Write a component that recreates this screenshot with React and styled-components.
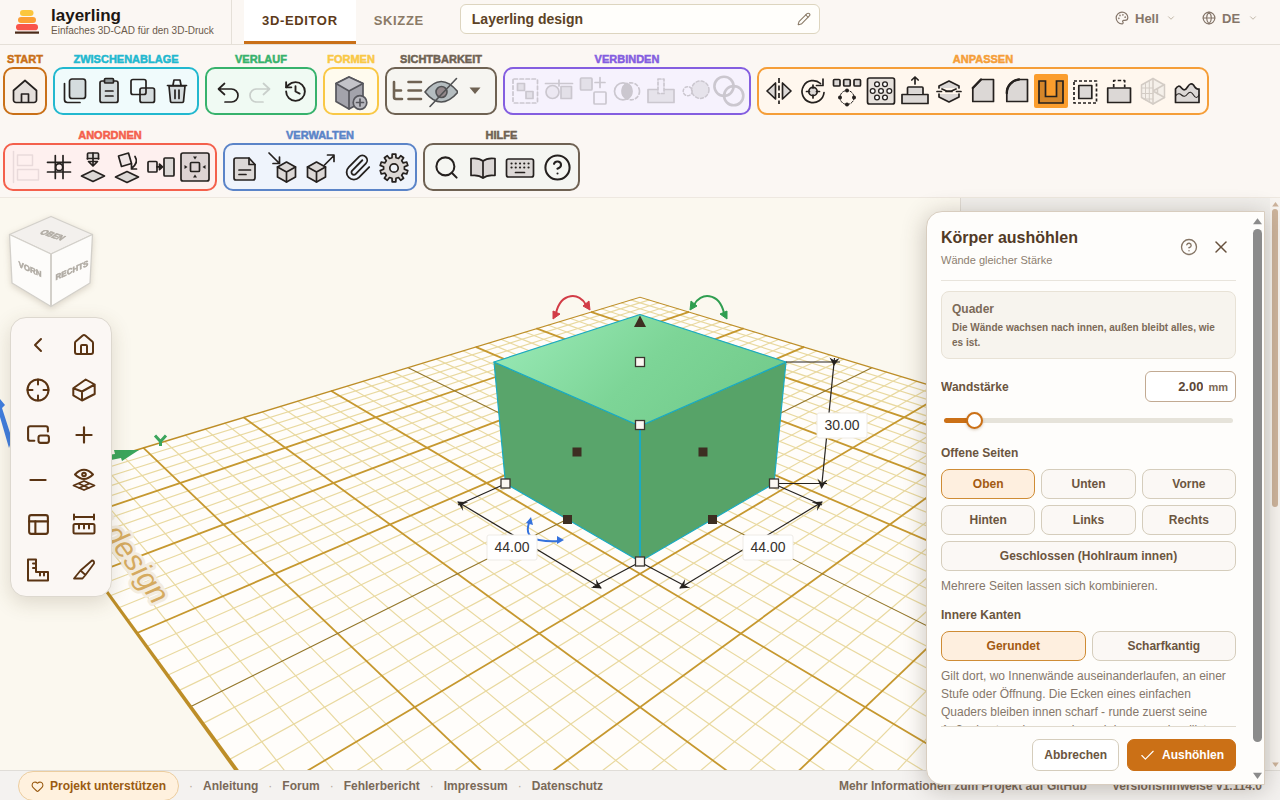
import React, { useState } from 'react'
import styled, { createGlobalStyle } from 'styled-components'
import {
  Check,
  ChevronDown,
  ChevronLeft,
  CircleHelp,
  Globe,
  Heart,
  History,
  House,
  Palette,
  PanelsTopLeft,
  Paperclip,
  Pencil,
  PictureInPicture2,
  Plus,
  Minus,
  Search,
  X,
} from 'lucide-react'

const GlobalStyle = createGlobalStyle`
  * {
    box-sizing: border-box;
  }
  body {
    margin: 0;
    overflow: hidden;
    background: #fbf8ef;
    color: #5b4636;
    font-family: 'Liberation Sans', Arial, sans-serif;
    font-size: 12px;
  }
  button, input, select {
    font: inherit;
    color: inherit;
  }
  button {
    cursor: pointer;
  }
`

const Page = styled.div`
  display: grid;
  grid-template-rows: auto auto 1fr 30px;
  height: 100vh;
`

/* ---------- header ---------- */

const Header = styled.header`
  display: flex;
  align-items: stretch;
  height: 45px;
  background: #fbf7f3;
  border-bottom: 1px solid #e5e0d8;
`

const Brand = styled.div`
  display: flex;
  align-items: center;
  gap: 12px;
  width: 232px;
  padding-left: 15px;
  border-right: 1px solid #e5e0d8;
`

const BrandName = styled.h1`
  margin: 0;
  font-size: 17px;
  line-height: 18px;
  color: #1d1712;
`

const BrandClaim = styled.p`
  margin: 0;
  font-size: 10px;
  line-height: 12px;
  white-space: nowrap;
  color: #6b5a4b;
`

const Tabs = styled.nav`
  display: flex;
  margin-left: 12px;
`

const Tab = styled.button`
  padding: 0 18px;
  border: 0;
  border-bottom: 3px solid ${(props) => (props.$active ? '#c97018' : 'transparent')};
  background: ${(props) => (props.$active ? '#fff' : 'none')};
  color: ${(props) => (props.$active ? '#5c3a1a' : '#8a7a66')};
  font-size: 13px;
  font-weight: 700;
  letter-spacing: 0.05em;
`

const NameField = styled.label`
  display: flex;
  align-items: center;
  width: 360px;
  height: 30px;
  margin: 4px 0 0 18px;
  padding: 0 8px 0 11px;
  border: 1px solid #ddd5bf;
  border-radius: 6px;
  background: #fffefb;
  color: #8a7a66;

  input {
    flex: 1;
    min-width: 0;
    padding: 0;
    border: 0;
    outline: 0;
    background: none;
    color: #5c4326;
    font-size: 14px;
    font-weight: 700;
  }
`

const HeaderTools = styled.div`
  display: flex;
  gap: 26px;
  margin: 0 22px 8px auto;
  align-items: center;
`

const Picker = styled.label`
  display: flex;
  align-items: center;
  gap: 6px;
  color: #85766a;

  select {
    padding: 0;
    border: 0;
    appearance: none;
    background: none;
    font-size: 13px;
    font-weight: 700;
  }
  svg:last-child {
    margin-left: 1px;
    color: #b5a998;
  }
`

/* ---------- tool ribbon ---------- */

const Ribbon = styled.div`
  display: flex;
  flex-wrap: wrap;
  gap: 14px 6px;
  padding: 8px 3px 6px;
  background: #fbf7f3;
  border-bottom: 1px solid #eee8e0;
`

const Group = styled.section`
  color: ${(props) => props.$tone};
`

const GroupTitle = styled.h2`
  margin: 0 0 2px;
  font-size: 11px;
  font-weight: 900;
  line-height: 12px;
  text-align: center;
  text-transform: uppercase;
  -webkit-text-stroke: 0.5px currentColor;
`

const GroupBody = styled.div`
  display: flex;
  align-items: center;
  gap: ${(props) => props.$gap || 0}px;
  height: 48px;
  padding: 0 3px;
  border: 2px solid currentColor;
  border-radius: 10px;
  background: ${(props) => props.$tint};
`

const Tool = styled.button`
  display: flex;
  align-items: center;
  justify-content: center;
  width: ${(props) => props.$w || 34}px;
  height: 34px;
  padding: 0;
  border: 0;
  border-radius: 2px;
  background: ${(props) => (props.$active ? '#fb9d2d' : 'none')};
  color: ${(props) => (props.$faint ? '#cbc7cf' : '#25211f')};
`

/* ---------- workspace ---------- */

const Workspace = styled.main`
  position: relative;
  display: flex;
  min-height: 0;
  background: #fbf8ef;
`

const Canvas = styled.svg`
  flex: 1;
  min-width: 0;
  width: 100%;
  height: 100%;
`

const SideDock = styled.aside`
  position: absolute;
  inset: 0 0 0 auto;
  display: flex;
  justify-content: flex-end;
  width: 320px;
  border-left: 1px solid #dfdad3;
  background: #f1efec;
`

const DockScroll = styled.div`
  display: flex;
  flex-direction: column;
  align-items: center;
  gap: 2px;
  width: 10px;
  padding: 4px 0 3px;
  background: #f8f5f1;
  color: #cdb49c;
`

const DockThumb = styled.div`
  width: 6px;
  height: 298px;
  margin-bottom: auto;
  border-radius: 3px;
  background: #cdb49c;
`

const ViewTools = styled.div`
  position: absolute;
  top: 16px;
  left: 8px;
`

const CubeButton = styled.button`
  display: block;
  padding: 0;
  border: 0;
  background: none;
  filter: drop-shadow(0 2px 3px rgba(90, 70, 40, 0.2));
`

const ViewPalette = styled.div`
  display: grid;
  grid-template-columns: 46px 46px;
  grid-auto-rows: 45px;
  width: 102px;
  margin: 5px 0 0 2px;
  padding: 4px;
  border: 1px solid #ddd8cf;
  border-radius: 16px;
  background: #fbf7f4;
  box-shadow: 0 6px 20px rgba(90, 70, 40, 0.18);
`

const PaletteButton = styled.button`
  display: grid;
  place-items: center;
  padding: 0;
  border: 0;
  background: none;
  color: #5a3413;
`

/* ---------- dialog ---------- */

const Dialog = styled.section`
  position: absolute;
  top: 13px;
  right: 15px;
  bottom: -15px;
  z-index: 2;
  display: flex;
  width: 339px;
  border: 1px solid #d8cdbf;
  border-radius: 16px 0 0 16px;
  background: #fefdfb;
  box-shadow: 0 4px 24px rgba(70, 55, 40, 0.3);
`

const DialogMain = styled.form`
  display: flex;
  flex: 1;
  flex-direction: column;
  min-width: 0;
  padding: 13px 14px 13px;
`

const DialogScroll = styled.div`
  display: flex;
  flex-direction: column;
  align-items: center;
  gap: 4px;
  width: 14px;
  padding: 6px 0 5px;
  color: #8b8b8b;
`

const DialogThumb = styled.div`
  flex: 1;
  width: 9px;
  margin-bottom: 26px;
  border-radius: 5px;
  background: #8b8b8b;
`

const DialogHead = styled.header`
  display: flex;
  align-items: center;
  gap: 10px;
  height: 56px;
  padding-bottom: 2px;
  border-bottom: 1px solid #e8e4dc;

  h2 {
    margin: 0 0 5px;
    color: #523a26;
    font-size: 16px;
    line-height: 20px;
  }
  p {
    margin: 0 0 9px;
    color: #8d7f70;
    font-size: 11px;
    line-height: 14px;
  }
  div {
    margin-right: auto;
  }
`

const HeadButton = styled.button`
  display: grid;
  place-items: center;
  width: 22px;
  height: 22px;
  margin-bottom: 10px;
  padding: 0;
  border: 0;
  background: none;
  color: #857565;

  &:last-child {
    margin-right: 4px;
    color: #66503c;
  }
`

const DialogBody = styled.div`
  display: flex;
  flex: 1;
  flex-direction: column;
  min-height: 0;
  padding-top: 10px;
  overflow: hidden;
`

const Info = styled.div`
  flex: none;
  padding: 9px 10px 8px;
  border: 1px solid #e8e2d6;
  border-radius: 8px;
  background: #f7f4ee;
  color: #7c6a58;
  font-size: 10px;
  font-weight: 700;
  line-height: 15px;

  strong {
    display: block;
    margin-bottom: 3px;
    font-size: 12px;
    line-height: 16px;
  }
`

const FieldRow = styled.div`
  display: flex;
  flex: none;
  align-items: center;
  justify-content: space-between;
  margin-top: 12px;
  color: #6b553f;
  font-weight: 700;
`

const Amount = styled.span`
  display: flex;
  align-items: center;
  gap: 5px;
  width: 91px;
  height: 31px;
  padding: 0 7px;
  border: 1px solid #c2aa92;
  border-radius: 6px;
  background: #fff;
  color: #7c6a58;
  font-size: 11px;

  input {
    flex: 1;
    min-width: 0;
    padding: 0;
    border: 0;
    outline: 0;
    background: none;
    color: #5b4636;
    font-size: 13px;
    font-weight: 700;
    text-align: right;
  }
`

const Slider = styled.input`
  flex: none;
  width: calc(100% - 6px);
  height: 18px;
  margin: 9px 3px 0;
  appearance: none;
  background: none;

  &::-webkit-slider-runnable-track {
    height: 5px;
    border-radius: 3px;
    background: linear-gradient(90deg, #cb7016 10%, #e6e3da 10%);
  }
  &::-webkit-slider-thumb {
    width: 17px;
    height: 17px;
    margin-top: -6px;
    appearance: none;
    border: 2px solid #cb7016;
    border-radius: 50%;
    background: #fff;
    box-shadow: 0 1px 3px rgba(120, 70, 20, 0.3);
  }
`

const FieldTitle = styled.h3`
  flex: none;
  margin: ${(props) => props.$top}px 0 8px;
  color: #6b553f;
  font-size: 12px;
  line-height: 16px;
`

const Choices = styled.div`
  display: grid;
  flex: none;
  grid-template-columns: repeat(${(props) => props.$cols}, 1fr);
  gap: 6px;
`

const Choice = styled.button`
  grid-column: ${(props) => (props.$wide ? '1 / -1' : 'auto')};
  height: 30px;
  padding: 0;
  border: 1px solid ${(props) => (props.$on ? '#cf8c35' : '#d5cdbc')};
  border-radius: 8px;
  background: ${(props) => (props.$on ? '#feefdf' : '#fbf8f5')};
  color: ${(props) => (props.$on ? '#a35a12' : '#6b553f')};
  font-weight: 700;
`

const Hint = styled.p`
  flex: none;
  margin: 6px 0 0;
  color: #85776a;
  line-height: 18px;
`

const Actions = styled.footer`
  display: flex;
  justify-content: flex-end;
  gap: 8px;
  padding-top: 12px;
  border-top: 1px solid #e0dace;
`

const Action = styled.button`
  display: flex;
  align-items: center;
  gap: 6px;
  height: 32px;
  padding: 0 11px;
  border: 1px solid ${(props) => (props.$primary ? '#cb7016' : '#d5cdbc')};
  border-radius: 7px;
  background: ${(props) => (props.$primary ? '#cb7016' : '#fff')};
  color: ${(props) => (props.$primary ? '#fff' : '#6b553f')};
  font-weight: 700;
`

/* ---------- footer ---------- */

const Footer = styled.footer`
  display: flex;
  align-items: flex-start;
  justify-content: space-between;
  padding: 0 18px;
  border-top: 1px solid #e0ddd8;
  background: #f4f2f0;
  font-weight: 700;
  line-height: 30px;
  white-space: nowrap;

  a {
    color: #7a6958;
    text-decoration: none;
  }
`

const FooterLinks = styled.nav`
  display: flex;

  span {
    width: 24px;
    color: #b5a998;
    font-weight: 400;
    text-align: center;
  }
`

const VersionLinks = styled.nav`
  display: flex;
  gap: 25px;
`

const Support = styled.a`
  display: flex;
  align-items: center;
  gap: 6px;
  height: 30px;
  padding: 0 12px;
  border: 1px solid #eccd9f;
  border-radius: 15px;
  background: #fff1de;

  && {
    color: #9a5b12;
  }
`

/* ---------- ribbon icons, all on a 34px board ---------- */

const FILL = '#dcd8d6'

const Board = ({ children, w = 34, h = 34, sw = 1.7, color = 'currentColor' }) => (
  <svg
    width={w}
    height={h}
    viewBox={`0 0 ${w} ${h}`}
    fill="none"
    stroke={color}
    strokeWidth={sw}
    strokeLinecap="round"
    strokeLinejoin="round"
    aria-hidden="true"
  >
    {children}
  </svg>
)

const gearPath = (cx, cy, rOut, rIn, teeth) => {
  const pts = []
  const step = (Math.PI * 2) / teeth
  for (let i = 0; i < teeth; i++) {
    const mid = i * step
    ;[
      [-0.3, rIn],
      [-0.2, rOut],
      [0.2, rOut],
      [0.3, rIn],
    ].forEach(([t, r]) => {
      const x = cx + r * Math.sin(mid + t * step)
      const y = cy - r * Math.cos(mid + t * step)
      pts.push(`${x.toFixed(1)} ${y.toFixed(1)}`)
    })
  }
  return `M${pts.join('L')}Z`
}

const SmallCube = ({ x }) => (
  <g transform={`translate(${x} 22)`} fill={FILL}>
    <path d="M0-10L9-5V5L0 10-9 5V-5Z" />
    <path d="M-9-5L0 0 9-5M0 0V10" />
  </g>
)

const icons = {
  home: (
    <Board>
      <path d="M5.5 16.5L17 6.5l11.5 10V26a2.5 2.5 0 0 1-2.5 2.5H8A2.5 2.5 0 0 1 5.5 26Z" fill="#e4dfdb" />
      <path d="M13.5 28v-8h7v8" />
    </Board>
  ),
  copy: (
    <Board>
      <rect x="11.5" y="5" width="16" height="19.5" rx="2.5" fill="#d5dcde" />
      <path d="M6.5 9.5v16a3 3 0 0 0 3 3H22" />
    </Board>
  ),
  paste: (
    <Board>
      <rect x="8" y="7" width="18" height="21.5" rx="2" fill="#d5dcde" />
      <rect x="12.5" y="4.5" width="9" height="4.5" rx="1" fill="#8f9698" />
      <path d="M13.5 17h7.5M13.5 22h7.5" />
    </Board>
  ),
  duplicate: (
    <Board>
      <rect x="14" y="14" width="14.5" height="14.5" rx="2" fill="#d5dcde" />
      <rect x="5" y="5.5" width="15" height="15" rx="2" />
    </Board>
  ),
  trash: (
    <Board>
      <path d="M9 12l1.5 15.5a1.5 1.5 0 0 0 1.5 1h10a1.5 1.5 0 0 0 1.5-1L25 12Z" fill="#d5dcde" />
      <path d="M7.5 11.5h19M13 11l1-5h6l1 5M15 16v8.5M19 16v8.5" />
    </Board>
  ),
  undo: (
    <Board>
      <path d="M14.5 9.5L8.5 15l6 5.5M9 15h12.5a6.5 6.5 0 0 1 0 13H15" />
    </Board>
  ),
  redo: (
    <Board color="#c9cfcb">
      <path d="M19.5 9.5l6 5.5-6 5.5M25 15H12.5a6.500 6.500 0 0 0 0 13H19" />
    </Board>
  ),
  history: <History size={25} strokeWidth={1.8} />,
  addShape: (
    <Board w={46} h={40} color="#56565c">
      <path d="M21 6l14 6.5v18L21 38 8 30.5v-18Z" fill="#a3a3ab" />
      <path d="M21 6l14 6.5L21 20 8 12.5Z" fill="#c3c3c9" />
      <path d="M21 20v18" />
      <circle cx="32" cy="31.5" r="6.8" fill="#b9b9bf" />
      <path d="M28.5 31.5h7M32 28v7" />
    </Board>
  ),
  tree: (
    <Board sw={2.6} color="#6f6253">
      <path d="M4 8v15a2 2 0 0 0 2 2h6M4 16.5h7M18.5 8H31M18.5 16.5H31M18.5 25H31" />
    </Board>
  ),
  hide: (
    <Board color="#515254" sw={1.6}>
      <path d="M1 18q16-21 33 0-17 20-33 0Z" fill="#b5bdc0" />
      <circle cx="17.5" cy="18" r="5.5" fill="#94898c" />
      <path d="M6 32.5L32.5 4.5" />
    </Board>
  ),
  caret: (
    <Board>
      <path d="M11.5 13.5h11l-5.500 6.500Z" fill="#6f6253" stroke="none" />
    </Board>
  ),
  group: (
    <Board>
      <rect x="5" y="5" width="24.5" height="24" rx="1" strokeDasharray="3.5 2.5" />
      <rect x="9.5" y="9.5" width="7" height="7" fill="#e3e0e8" />
      <rect x="18" y="17.5" width="7" height="7" fill="#e3e0e8" />
    </Board>
  ),
  alignTop: (
    <Board>
      <path d="M3.5 9.5h27M17 6v6" />
      <circle cx="10.5" cy="18" r="6.5" fill="#ece8f2" />
      <rect x="19" y="12.5" width="10.5" height="12" fill="#e3e0e8" />
    </Board>
  ),
  addPart: (
    <Board>
      <rect x="4.5" y="4" width="11.5" height="12" rx="1" fill="#e3e0e8" />
      <rect x="18" y="18" width="12" height="12" rx="1" />
      <path d="M24 3.5v10M19 8.5h10" />
    </Board>
  ),
  intersect: (
    <Board>
      <path d="M17 9.5a8.500 8.500 0 0 1 0 15.500 8.500 8.500 0 0 1 0-15.500Z" fill="#cbc7cf" />
      <circle cx="13" cy="17.3" r="8.5" />
      <circle cx="21" cy="17.3" r="8.5" strokeDasharray="3 2.5" />
    </Board>
  ),
  cutOut: (
    <Board>
      <rect x="4" y="15.5" width="26" height="13" fill="#e6e3eb" />
      <rect x="14" y="5" width="6" height="14.5" fill="#f3effa" strokeDasharray="3 2" />
    </Board>
  ),
  subtract: (
    <Board sw={1.5}>
      <circle cx="22.3" cy="15.7" r="8.7" fill="#e6e3eb" strokeDasharray="3 2.2" />
      <circle cx="9.7" cy="17.2" r="4.5" strokeDasharray="2.5 2" />
    </Board>
  ),
  link: (
    <Board sw={2.6}>
      <circle cx="12" cy="12.3" r="9.6" />
      <circle cx="21.7" cy="21.7" r="9.6" />
    </Board>
  ),
  mirror: (
    <Board>
      <path d="M5 17l8.5-8v16Z" fill={FILL} />
      <path d="M29 17l-8.5-8v16Z" fill={FILL} />
      <path d="M17 4v26" strokeDasharray="5 2.5" strokeLinecap="butt" />
    </Board>
  ),
  rotate: (
    <Board>
      <path d="M28 18.5A11 11 0 1 1 24.5 9.5M27 5v6.5h-6.5" />
      <circle cx="17" cy="17.5" r="4.2" fill={FILL} />
      <path d="M17 11v3M17 21v3M10.5 17.5h3M20.5 17.5h3" />
    </Board>
  ),
  array: (
    <Board>
      <rect x="3.5" y="5.5" width="6.5" height="6.5" rx="1" fill={FILL} />
      <rect x="13.7" y="5.5" width="6.5" height="6.5" rx="1" fill={FILL} />
      <rect x="24" y="5.5" width="6.5" height="6.5" rx="1" fill={FILL} />
      <circle cx="17" cy="23.5" r="7" strokeWidth="1" strokeDasharray="2.5 1.5" />
      <g fill="currentColor" stroke="none">
        <circle cx="17" cy="16.5" r="2" />
        <circle cx="17" cy="30.5" r="2" />
        <circle cx="10" cy="23.5" r="2" />
        <circle cx="24" cy="23.5" r="2" />
      </g>
    </Board>
  ),
  perforate: (
    <Board>
      <rect x="3.5" y="4" width="27" height="26" rx="2" fill="#e6e1dc" />
      <g strokeWidth="1.3" fill="#fff">
        {[[13, 10.3], [21, 10.3], [8.7, 17], [17, 17], [25.3, 17], [13, 23.5], [21, 23.5]].map(([x, y]) => (
          <circle key={`${x}-${y}`} cx={x} cy={y} r="2.4" />
        ))}
      </g>
    </Board>
  ),
  extrude: (
    <Board>
      <rect x="4" y="20.5" width="26" height="9" fill={FILL} />
      <path d="M9.5 20v-6a1 1 0 0 1 1-1H24a1 1 0 0 1 1 1v6" fill={FILL} />
      <path d="M17 10V3M13.8 6L17 3l3.200 3" />
    </Board>
  ),
  cut: (
    <Board>
      <path d="M7 14v-2l10-5 10 5v2" fill={FILL} />
      <path d="M7 20v3l10 5 10-5v-3" fill={FILL} />
      <path d="M10 15l4.5 2h5L24 15M5 17.5h4.5M14 17.500h6M24.500 17.500h4.500" />
    </Board>
  ),
  chamfer: (
    <Board>
      <path d="M6.8 27.5V14L15 5.5h12.5v22Z" fill={FILL} />
      <path d="M6.8 14L15 5.5" strokeWidth="2.4" />
    </Board>
  ),
  fillet: (
    <Board>
      <path d="M6.8 27.5V19A13.5 13.5 0 0 1 19 5.5h8.5v22Z" fill={FILL} />
      <path d="M6.8 19A13.5 13.5 0 0 1 19 5.5" strokeWidth="2.4" />
    </Board>
  ),
  hollow: (
    <Board>
      <path d="M5 7h6.5v15.5h11V7H29v22H5Z" fill="#d5862a" strokeLinejoin="miter" />
    </Board>
  ),
  shell: (
    <Board>
      <rect x="6" y="7" width="22.5" height="22" strokeDasharray="3 2" strokeLinecap="butt" />
      <rect x="10.8" y="11.5" width="13" height="13" fill={FILL} />
    </Board>
  ),
  boss: (
    <Board>
      <rect x="5.7" y="14" width="22.8" height="14.5" fill={FILL} />
      <path d="M11.7 13.5V6.5h11v7" strokeDasharray="3.5 2" strokeLinecap="butt" />
    </Board>
  ),
  mesh: (
    <Board color="#d3ccc5" sw={1.5}>
      <path d="M17 4.5l11.5 6.5v12.5L17 30 5.500 23.500V11Z" fill="#f5f0ea" />
      <path d="M17 4.5V30M17 17l11.500-6.500M17 17l11.500 6.500M21.500 14.500v5.500" />
      <path d="M9.500 9v17M13.300 7v21M5.500 14H17M5.500 19.500H17M8 25h9" strokeWidth="1" />
    </Board>
  ),
  waves: (
    <Board>
      <path d="M5.5 28.5V15q3-5 6-1t6-1 6-2q3 5 5.500 4v13.500Z" fill={FILL} />
      <path d="M5.5 22q3-4 6-1t6-1 6 1 5.500 0" strokeWidth="1.1" />
    </Board>
  ),
  alignLeft: (
    <Board color="#e9dadb" sw={1.5}>
      <path d="M5.5 1.5v31" />
      <rect x="9.5" y="5" width="15" height="10.5" />
      <rect x="9.5" y="19.5" width="21" height="10.5" />
    </Board>
  ),
  snapGrid: (
    <Board>
      <path d="M13.3 5.5v23M21 5.5v23M5.5 12.3h23M5.5 22h23" />
      <circle cx="17.2" cy="17.2" r="3.5" />
    </Board>
  ),
  drop: (
    <Board>
      <path d="M11.5 9V4a1 1 0 0 1 1-1h9a1 1 0 0 1 1 1v5" fill={FILL} />
      <path d="M11.5 8.5h11M17 3v12.500M12.500 11.500l4.500 4.500 4.500-4.500Z" />
      <path d="M5.5 26L17 20.5 28.5 26 17 31.500Z" fill={FILL} />
    </Board>
  ),
  layFlat: (
    <Board>
      <path d="M8.5 6l10-3 3 10.5-10 3Z" fill="#f0e6e6" />
      <path d="M25 6.5q4 6-3.500 12M21.500 14v5h5" />
      <path d="M5.5 27L17 21.5 28.5 27 17 32.500Z" fill={FILL} />
    </Board>
  ),
  attach: (
    <Board>
      <rect x="4" y="11.5" width="9" height="10.5" rx="1" fill="#f0e6e6" />
      <rect x="20" y="8" width="10" height="18" rx="1" fill={FILL} />
      <path d="M13 16.8h4M15.5 14l3 2.800-3 2.800Z" fill="currentColor" />
    </Board>
  ),
  center: (
    <Board>
      <rect x="3" y="3" width="28" height="28" rx="2" fill="#ddd3d3" />
      <rect x="12.5" y="12.5" width="9" height="9" rx="1" />
      <path
        d="M15 6.5h4l-2 3ZM15 27.5h4l-2-3ZM6.5 15v4l3-2ZM27.5 15v4l-3-2Z"
        fill="currentColor"
        stroke="none"
      />
    </Board>
  ),
  notes: (
    <Board>
      <path d="M5 10a2 2 0 0 1 2-2h13l6 6.500V28a2 2 0 0 1-2 2H7a2 2 0 0 1-2-2Z" fill={FILL} />
      <path d="M20 8v6.5h6M10 20h11.500M10 24.500h7" />
    </Board>
  ),
  importModel: (
    <Board>
      <path d="M3 3l10.5 10.5M13.5 7v6.5H7" />
      <SmallCube x={20.5} />
    </Board>
  ),
  exportModel: (
    <Board>
      <path d="M21.5 15L31 5.5M24.5 5H31v6.5" />
      <SmallCube x={13.5} />
    </Board>
  ),
  clip: <Paperclip size={29} strokeWidth={1.5} />,
  gear: (
    <Board>
      <path d={gearPath(17, 18, 14, 10.5, 10)} fill={FILL} />
      <circle cx="17" cy="18" r="4.2" fill="#eef2f9" />
    </Board>
  ),
  search: <Search size={27} strokeWidth={1.8} />,
  manual: (
    <Board>
      <path d="M17 11q-4-3.500-12-2.500v17q8-1 12 2.500 4-3.500 12-2.500v-17q-8-1-12 2.500ZM17 11v17" fill={FILL} />
    </Board>
  ),
  keys: (
    <Board>
      <rect x="3.5" y="9" width="27" height="18" rx="2" fill={FILL} />
      <path
        d="M8.500 13.500h.1M12.700 13.500h.1M17 13.500h.1M21.200 13.500h.1M25.500 13.500h.1M8.500 17.500h.1M12.700 17.500h.1M17 17.500h.1M21.200 17.500h.1M25.500 17.500h.1"
        strokeWidth="2.1"
      />
      <path d="M12.500 22.500h9" />
    </Board>
  ),
  help: <CircleHelp size={29} strokeWidth={1.7} />,
}

const groups = [
  { title: 'Start', tone: '#c97018', tint: '#fcf4ec', tools: [['home', 'Startseite']] },
  {
    title: 'Zwischenablage',
    tone: '#22b8cf',
    tint: '#f0fbfc',
    tools: [['copy', 'Kopieren'], ['paste', 'Einfügen'], ['duplicate', 'Duplizieren'], ['trash', 'Löschen']],
  },
  {
    title: 'Verlauf',
    tone: '#37b26c',
    tint: '#f0faf3',
    tools: [['undo', 'Rückgängig'], ['redo', 'Wiederholen'], ['history', 'Verlauf']],
  },
  { title: 'Formen', tone: '#f9c846', tint: '#fffbee', width: 46, tools: [['addShape', 'Form hinzufügen']] },
  {
    title: 'Sichtbarkeit',
    tone: '#6f6253',
    tint: '#f6f5f1',
    tools: [['tree', 'Objektbaum'], ['hide', 'Ausblenden'], ['caret', 'Weitere']],
  },
  {
    title: 'Verbinden',
    tone: '#845ee0',
    tint: '#f6f2fd',
    faint: true,
    tools: [
      ['group', 'Gruppieren'],
      ['alignTop', 'Bündig'],
      ['addPart', 'Vereinen'],
      ['intersect', 'Schnittmenge'],
      ['cutOut', 'Ausschneiden'],
      ['subtract', 'Abziehen'],
      ['link', 'Verketten'],
    ],
  },
  {
    title: 'Anpassen',
    tone: '#f59e38',
    tint: '#fff7ee',
    tools: [
      ['mirror', 'Spiegeln'],
      ['rotate', 'Drehen'],
      ['array', 'Muster'],
      ['perforate', 'Lochmuster'],
      ['extrude', 'Extrudieren'],
      ['cut', 'Schneiden'],
      ['chamfer', 'Fase'],
      ['fillet', 'Rundung'],
      ['hollow', 'Aushöhlen'],
      ['shell', 'Versatz'],
      ['boss', 'Aufsatz'],
      ['mesh', 'Netz'],
      ['waves', 'Textur'],
    ],
  },
  {
    title: 'Anordnen',
    tone: '#f4604c',
    tint: '#fef0ef',
    tools: [
      ['alignLeft', 'Ausrichten'],
      ['snapGrid', 'Am Raster'],
      ['drop', 'Auf Boden'],
      ['layFlat', 'Flach legen'],
      ['attach', 'Anlegen'],
      ['center', 'Zentrieren'],
    ],
  },
  {
    title: 'Verwalten',
    tone: '#5b84c8',
    tint: '#eff4fc',
    width: 36,
    gap: 1,
    tools: [
      ['notes', 'Notizen'],
      ['importModel', 'Importieren'],
      ['exportModel', 'Exportieren'],
      ['clip', 'Anhänge'],
      ['gear', 'Einstellungen'],
    ],
  },
  {
    title: 'Hilfe',
    tone: '#6f6253',
    tint: '#f5f6f2',
    width: 36,
    gap: 1,
    tools: [['search', 'Suche'], ['manual', 'Anleitung'], ['keys', 'Tastenkürzel'], ['help', 'Hilfe']],
  },
]

/* ---------- 3D view ---------- */

// Ground plane: u runs down-left, v runs down-right from the rear corner, in mm.
const HORIZON = 6
const DEPTH = 0.00195
const BED = 200

const project = (u, v) => {
  const d = 1 - DEPTH * (u + v)
  return [640 + (959 * DEPTH * (v - u)) / d, HORIZON + 291 / d]
}

const points = (list) => list.map(([u, v]) => project(u, v).map((n) => n.toFixed(1)).join(',')).join(' ')

const gridLines = (step, skip) => {
  const lines = []
  for (let n = step; n < BED; n += step) {
    if (n % skip === 0) continue
    const end = Math.min(BED, 335 - n)
    lines.push(points([[n, 0], [n, end]]), points([[0, n], [end, n]]))
  }
  return lines
}

const minorLines = gridLines(5, 25)
const majorLines = gridLines(25, 100)

const solidHandles = [[577, 452], [703, 452], [567.5, 519.5], [712.5, 519.5]]
const openHandles = [[640, 362], [640, 425], [505.5, 483.5], [774, 483.5], [640, 561.5]]

const Measure = ({ x, y, children }) => (
  <g>
    <rect x={x - 25} y={y - 13} width="50" height="25" rx="2" fill="#fff" stroke="#eeebe6" />
    <text x={x} y={y + 4} textAnchor="middle" fontSize="14" fill="#37322e">
      {children}
    </text>
  </g>
)

const RotateArrow = () => (
  <g>
    <path d="M556 313C561 292 580 292 586 305" fill="none" stroke="currentColor" strokeWidth="2" />
    <path d="M553 319l0-8 7 3ZM590 310l-7-4 6-5Z" fill="currentColor" stroke="currentColor" />
  </g>
)

const Scene = () => (
  <Canvas viewBox="0 198 1280 572" preserveAspectRatio="xMidYMid slice" role="img" aria-label="3D-Ansicht">
    <defs>
      <linearGradient id="lid" x1="0" y1="0.3" x2="1" y2="0.7">
        <stop offset="0" stopColor="#97e8b4" />
        <stop offset="0.5" stopColor="#7dd597" />
        <stop offset="1" stopColor="#72ca8a" />
      </linearGradient>
      <marker
        id="tip"
        viewBox="0 0 10 10"
        refX="9"
        refY="5"
        markerWidth="11"
        markerHeight="10"
        markerUnits="userSpaceOnUse"
        orient="auto-start-reverse"
      >
        <path d="M0 0L10 5 0 10 4 5Z" fill="#26221e" />
      </marker>
    </defs>

    <polygon points={points([[0, 0], [0, 200], [135, 200], [200, 135], [200, 0]])} fill="#fffdfa" />
    <g fill="none" stroke="#e9d9a0" strokeWidth="1.2">
      {minorLines.map((line) => (
        <polyline key={line} points={line} />
      ))}
    </g>
    <g fill="none" stroke="#c6982f" strokeWidth="1.8">
      {majorLines.map((line) => (
        <polyline key={line} points={line} />
      ))}
    </g>
    <g fill="none" stroke="#94772a" strokeWidth="1.1">
      <polyline points={points([[100, 0], [100, 200]])} />
      <polyline points={points([[0, 100], [200, 100]])} />
    </g>
    <g fill="#bd8e28">
      <polygon points={points([[-0.3, -0.3], [200, -0.3], [200, 0.7], [0.7, 0.7]])} />
      <polygon points={points([[-0.3, -0.3], [-0.3, 200], [0.7, 200], [0.7, 0.7]])} />
      <polygon points={points([[199.6, 0], [200.1, 0], [200.1, 130], [199.6, 130]])} />
      <polygon points={points([[0, 199.6], [0, 200.1], [130, 200.1], [130, 199.6]])} />
    </g>

    <text
      transform="translate(154 606) rotate(55)"
      textAnchor="end"
      fontSize="30"
      fontStyle="italic"
      fill="#d5aa60"
      stroke="#f3ecdf"
      strokeWidth="6"
      strokeLinejoin="round"
      paintOrder="stroke"
    >
      layerling design
    </text>

    <path d="M0 399l5 6-3 3 10 31-3 9L-2 410Z" fill="#3e7de0" />
    <path d="M100 456l15-2-1-4 25 0-17 11-1-3-20 4Z" fill="#3ba55c" />
    <path d="M155 435.500l5.500 6 5.500-6M160.500 441v5" fill="none" stroke="#3ba55c" strokeWidth="3" />

    <g stroke="#19aac2" strokeWidth="1.2" strokeLinejoin="round">
      <polygon points="494,362 640,426 640,561.5 505.5,483.5" fill="#59a56b" />
      <polygon points="786,362 640,426 640,561.5 774,483.5" fill="#57a368" />
      <polygon points="494,362 640,314.5 786,362 640,426" fill="url(#lid)" />
      <path d="M640 426V561" strokeWidth="2" />
    </g>

    <g stroke="#26221e" strokeWidth="1.2">
      <path d="M786 362h54M774 483.5h53M505 484l-47 21M640 562l-47 25M640 562l47 25M774 484l48 21" />
      <line x1="834.5" y1="358" x2="821.5" y2="488" markerEnd="url(#tip)" />
      <path d="M829.500 357.500l4.500 8.500 5.500-8-5 2.500Z" fill="#26221e" stroke="none" />
      <g>
        <line x1="458" y1="502" x2="601" y2="588" markerStart="url(#tip)" markerEnd="url(#tip)" />
        <line x1="822" y1="502" x2="680" y2="588" markerStart="url(#tip)" markerEnd="url(#tip)" />
      </g>
    </g>

    <g color="#d23c46">
      <RotateArrow />
    </g>
    <g color="#2f9e50" transform="translate(1280 0) scale(-1 1)">
      <RotateArrow />
    </g>
    <g color="#3572dd">
      <path d="M529 523q-5 14 10 17 10 2 20 1" fill="none" stroke="currentColor" strokeWidth="2" />
      <path d="M531 517l2 8-7-2ZM564 540l-7-4v8Z" fill="currentColor" />
    </g>

    <path d="M640 315.5l6 11.5h-12Z" fill="#3d2e22" />
    {solidHandles.map(([x, y]) => (
      <rect key={`${x}-${y}`} x={x - 4.5} y={y - 4.5} width="9" height="9" fill="#3d2e22" />
    ))}
    {openHandles.map(([x, y]) => (
      <rect
        key={`${x}-${y}`}
        x={x - 4.5}
        y={y - 4.5}
        width="9"
        height="9"
        fill="#fbf7f2"
        stroke="#3b352f"
        strokeWidth="1.3"
      />
    ))}

    <Measure x={512} y={548}>44.00</Measure>
    <Measure x={768} y={548}>44.00</Measure>
    <Measure x={842} y={426}>30.00</Measure>
  </Canvas>
)

const ViewCube = () => (
  <CubeButton type="button" aria-label="Ansichtswürfel">
    <svg width="86" height="95" viewBox="0 0 86 95">
      <g stroke="#d3d0ca" strokeWidth="1.3" strokeLinejoin="round">
        <path d="M43 2.5L84.5 20.5 43 40 1.5 20.5Z" fill="#f3f0ed" />
        <path d="M1.5 20.5L43 40V92.5L4 69Z" fill="#fdfcfa" />
        <path d="M84.5 20.5L43 40V92.5L82 69Z" fill="#fdfcfa" />
        <path d="M43 40V92" strokeWidth="2" />
      </g>
      <g fontSize="8" fontWeight="900" fill="#b0aba3" stroke="#b0aba3" strokeWidth="0.5" textAnchor="middle">
        <text transform="translate(42 23) rotate(18) skewX(-35)">OBEN</text>
        <text transform="translate(22 58) skewY(24)">VORN</text>
        <text transform="translate(64 59) skewY(-24)">RECHTS</text>
      </g>
    </svg>
  </CubeButton>
)

const Glyph = ({ children }) => (
  <svg
    width="24"
    height="24"
    viewBox="0 0 24 24"
    fill="none"
    stroke="currentColor"
    strokeWidth="2"
    strokeLinecap="round"
    strokeLinejoin="round"
    aria-hidden="true"
  >
    {children}
  </svg>
)

const viewActions = [
  ['Einklappen', <ChevronLeft size={24} />],
  ['Startansicht', <House size={24} />],
  [
    'Zentrieren',
    <Glyph>
      <circle cx="12" cy="12" r="10.5" />
      <path d="M12 1.5v5M12 17.5v5M1.5 12h5M17.5 12h5" />
    </Glyph>,
  ],
  [
    'Perspektive',
    <Glyph>
      <path d="M13.7 1.5l9 5v9.5L10 22.5l-8.700-5.200v-7ZM1.300 10.300l8.700 3.200 12.700-7M10 13.500v9" />
    </Glyph>,
  ],
  ['Bild im Bild', <PictureInPicture2 size={25} />],
  ['Vergrößern', <Plus size={26} />],
  ['Verkleinern', <Minus size={26} />],
  [
    'Ebenen anzeigen',
    <Glyph>
      <path d="M3 6.5q9-9.500 18 0-9 9-18 0Z" />
      <circle cx="12" cy="6.5" r="1.800" />
      <path d="M1.500 17.500L12 13l10.500 4.500L12 22ZM6.500 15.500l10.500 4.500M17.500 15.500L7 20" strokeWidth="1.800" />
    </Glyph>,
  ],
  ['Arbeitsebene', <PanelsTopLeft size={25} />],
  [
    'Messen',
    <Glyph>
      <path d="M2 1.5v5M22 1.5v5M2 4h20" />
      <rect x="1.5" y="11" width="21" height="9.5" rx="1.5" />
      <path d="M7 11.5v4M12 11.5v4M17 11.5v4" />
    </Glyph>,
  ],
  [
    'Lineal',
    <Glyph>
      <path d="M2 1.5h8v12.5h12v8.5H2ZM10 5.500H7M10 10H7M14 14v3.500M18 14v3.500" />
    </Glyph>,
  ],
  [
    'Schnitt',
    <Glyph>
      <path d="M2 20.5l6.5-8L20 2.5q2.500 0 2 3L13.500 17l-3 3.500ZM8.500 12.500l5 4.500" strokeWidth="1.800" />
    </Glyph>,
  ],
]

const Arrow = ({ w, down }) => (
  <svg width={w} height={w - 2} viewBox="0 0 8 6" aria-hidden="true">
    <path d={down ? 'M0 0.5h8L4 6Z' : 'M0 5.5h8L4 0Z'} fill="currentColor" />
  </svg>
)

const HollowDialog = () => {
  const [thickness, setThickness] = useState('2.00')
  const [side, setSide] = useState('Oben')
  const [edge, setEdge] = useState('Gerundet')

  return (
    <Dialog aria-labelledby="dialog-title">
      <DialogMain onSubmit={(e) => e.preventDefault()}>
        <DialogHead>
          <div>
            <h2 id="dialog-title">Körper aushöhlen</h2>
            <p>Wände gleicher Stärke</p>
          </div>
          <HeadButton type="button" aria-label="Hilfe">
            <CircleHelp size={18} strokeWidth={1.8} />
          </HeadButton>
          <HeadButton type="button" aria-label="Schließen">
            <X size={20} strokeWidth={1.8} />
          </HeadButton>
        </DialogHead>

        <DialogBody>
          <Info>
            <strong>Quader</strong>
            Die Wände wachsen nach innen, außen bleibt alles, wie es ist.
          </Info>

          <FieldRow>
            <label htmlFor="thickness">Wandstärke</label>
            <Amount>
              <input id="thickness" value={thickness} onChange={(e) => setThickness(e.target.value)} />
              mm
            </Amount>
          </FieldRow>
          <Slider
            type="range"
            aria-label="Wandstärke"
            min="0.4"
            max="20"
            step="0.1"
            value={thickness}
            onChange={(e) => setThickness(Number(e.target.value).toFixed(2))}
          />

          <FieldTitle $top={16}>Offene Seiten</FieldTitle>
          <Choices $cols={3}>
            {['Oben', 'Unten', 'Vorne', 'Hinten', 'Links', 'Rechts', 'Geschlossen (Hohlraum innen)'].map((name, index) => (
              <Choice key={name} type="button" $on={name === side} $wide={index === 6} onClick={() => setSide(name)}>
                {name}
              </Choice>
            ))}
          </Choices>
          <Hint>Mehrere Seiten lassen sich kombinieren.</Hint>

          <FieldTitle $top={12}>Innere Kanten</FieldTitle>
          <Choices $cols={2}>
            {['Gerundet', 'Scharfkantig'].map((name) => (
              <Choice key={name} type="button" $on={name === edge} onClick={() => setEdge(name)}>
                {name}
              </Choice>
            ))}
          </Choices>
          <Hint>
            Gilt dort, wo Innenwände auseinanderlaufen, an einer Stufe oder Öffnung. Die Ecken eines einfachen Quaders
            bleiben innen scharf - runde zuerst seine Außenkanten ab, wenn du auch innen runde willst.
          </Hint>
        </DialogBody>

        <Actions>
          <Action type="button">Abbrechen</Action>
          <Action type="submit" $primary>
            <Check size={17} strokeWidth={1.6} />
            Aushöhlen
          </Action>
        </Actions>
      </DialogMain>
      <DialogScroll>
        <Arrow w={9} />
        <DialogThumb />
        <Arrow w={9} down />
      </DialogScroll>
    </Dialog>
  )
}

const Logo = () => (
  <svg width="24" height="24" viewBox="0 0 24 24" aria-hidden="true">
    <rect x="5" y="0" width="13.5" height="6" rx="3" fill="#fbc63d" />
    <rect x="3" y="7" width="18" height="6" rx="3" fill="#fb9f35" />
    <rect x="1" y="14" width="22" height="6.3" rx="3.1" fill="#f9544a" />
    <rect x="0" y="21.5" width="24" height="2.2" fill="#4a2a18" />
  </svg>
)

const footerLinks = ['Anleitung', 'Forum', 'Fehlerbericht', 'Impressum', 'Datenschutz']

const App = () => {
  const [name, setName] = useState('Layerling design')

  return (
    <Page>
      <GlobalStyle />
      <Header>
        <Brand>
          <Logo />
          <div>
            <BrandName>layerling</BrandName>
            <BrandClaim>Einfaches 3D-CAD für den 3D-Druck</BrandClaim>
          </div>
        </Brand>
        <Tabs>
          <Tab type="button" $active>
            3D-EDITOR
          </Tab>
          <Tab type="button">SKIZZE</Tab>
        </Tabs>
        <NameField>
          <input aria-label="Projektname" value={name} onChange={(e) => setName(e.target.value)} />
          <Pencil size={14} strokeWidth={1.8} />
        </NameField>
        <HeaderTools>
          <Picker>
            <Palette size={14} />
            <select aria-label="Design">
              <option>Hell</option>
            </select>
            <ChevronDown size={10} />
          </Picker>
          <Picker>
            <Globe size={14} />
            <select aria-label="Sprache">
              <option>DE</option>
            </select>
            <ChevronDown size={10} />
          </Picker>
        </HeaderTools>
      </Header>

      <Ribbon>
        {groups.map((group) => (
          <Group key={group.title} $tone={group.tone}>
            <GroupTitle>{group.title}</GroupTitle>
            <GroupBody $tint={group.tint} $gap={group.gap}>
              {group.tools.map(([icon, label]) => (
                <Tool
                  key={icon}
                  type="button"
                  aria-label={label}
                  $w={group.width}
                  $faint={group.faint}
                  $active={icon === 'hollow'}
                >
                  {icons[icon]}
                </Tool>
              ))}
            </GroupBody>
          </Group>
        ))}
      </Ribbon>

      <Workspace>
        <Scene />
        <ViewTools>
          <ViewCube />
          <ViewPalette>
            {viewActions.map(([label, icon]) => (
              <PaletteButton key={label} type="button" aria-label={label}>
                {icon}
              </PaletteButton>
            ))}
          </ViewPalette>
        </ViewTools>
        <SideDock>
          <DockScroll>
            <Arrow w={7} />
            <DockThumb />
            <Arrow w={7} down />
          </DockScroll>
        </SideDock>
        <HollowDialog />
      </Workspace>

      <Footer>
        <FooterLinks>
          <Support href="#support">
            <Heart size={13} />
            Projekt unterstützen
          </Support>
          {footerLinks.map((link) => (
            <React.Fragment key={link}>
              <span>·</span>
              <a href={`#${link.toLowerCase()}`}>{link}</a>
            </React.Fragment>
          ))}
        </FooterLinks>
        <VersionLinks>
          <a href="#github">Mehr Informationen zum Projekt auf GitHub</a>
          <a href="#version">Versionshinweise v1.114.0</a>
        </VersionLinks>
      </Footer>
    </Page>
  )
}

export default App
